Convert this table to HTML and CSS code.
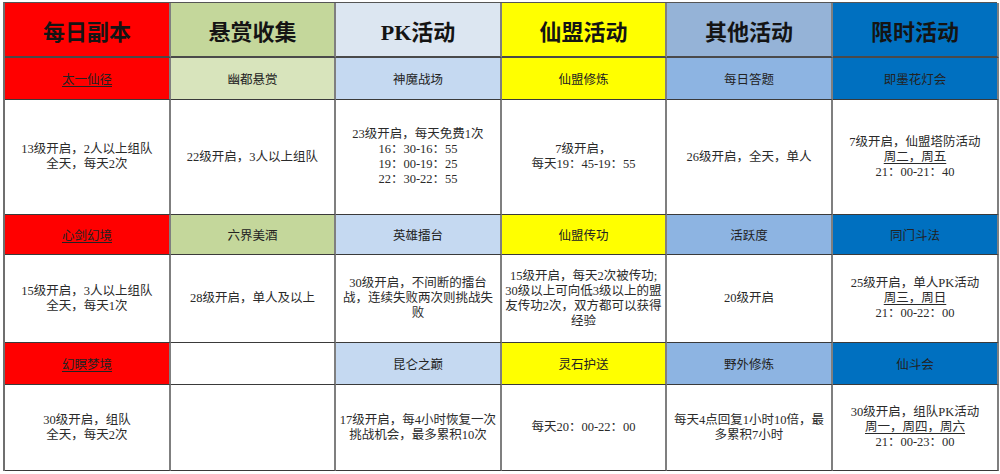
FILE: index.html
```html
<!DOCTYPE html>
<html lang="zh-CN">
<head>
<meta charset="utf-8">
<title>活动表</title>
<link rel="stylesheet" href="styles.css">
</head>
<body>
<div class="sheet">
  <div class="c h red">每日副本</div>
  <div class="c h green">悬赏收集</div>
  <div class="c h pale">PK活动</div>
  <div class="c h yellow">仙盟活动</div>
  <div class="c h steel">其他活动</div>
  <div class="c h blue">限时活动</div>

  <div class="c s red"><span class="u">太一仙径</span></div>
  <div class="c s green-lt">幽都悬赏</div>
  <div class="c s pale2">神魔战场</div>
  <div class="c s yellow">仙盟修炼</div>
  <div class="c s steel2">每日答题</div>
  <div class="c s blue">即墨花灯会</div>

  <div class="c d"><p class="t">13级开启，2人以上组队<br>全天，每天2次</p></div>
  <div class="c d"><p class="t">22级开启，3人以上组队</p></div>
  <div class="c d"><p class="t">23级开启，每天免费1次<br>16：30-16：55<br>19：00-19：25<br>22：30-22：55</p></div>
  <div class="c d"><p class="t">7级开启，<br>每天19：45-19：55</p></div>
  <div class="c d"><p class="t">26级开启，全天，单人</p></div>
  <div class="c d"><p class="t">7级开启，仙盟塔防活动<br><span class="u">周二，周五</span><br>21：00-21：40</p></div>

  <div class="c s red"><span class="u">心剑幻境</span></div>
  <div class="c s green">六界美酒</div>
  <div class="c s pale2">英雄擂台</div>
  <div class="c s yellow">仙盟传功</div>
  <div class="c s steel2">活跃度</div>
  <div class="c s blue">同门斗法</div>

  <div class="c d"><p class="t">15级开启，3人以上组队<br>全天，每天1次</p></div>
  <div class="c d"><p class="t">28级开启，单人及以上</p></div>
  <div class="c d"><p class="t">30级开启，不间断的擂台<br>战，连续失败两次则挑战失<br>败</p></div>
  <div class="c d"><p class="t">15级开启，每天2次被传功;<br>30级以上可向低3级以上的盟<br>友传功2次，双方都可以获得<br>经验</p></div>
  <div class="c d"><p class="t">20级开启</p></div>
  <div class="c d"><p class="t">25级开启，单人PK活动<br><span class="u">周三，周日</span><br>21：00-22：00</p></div>

  <div class="c s red"><span class="u">幻瞑梦境</span></div>
  <div class="c s white"></div>
  <div class="c s pale2">昆仑之巅</div>
  <div class="c s yellow">灵石护送</div>
  <div class="c s steel2">野外修炼</div>
  <div class="c s blue">仙斗会</div>

  <div class="c d"><p class="t">30级开启，组队<br>全天，每天2次</p></div>
  <div class="c d"></div>
  <div class="c d"><p class="t">17级开启，每4小时恢复一次<br>挑战机会，最多累积10次</p></div>
  <div class="c d"><p class="t">每天20：00-22：00</p></div>
  <div class="c d"><p class="t">每天4点回复1小时10倍，最<br>多累积7小时</p></div>
  <div class="c d"><p class="t">30级开启，组队PK活动<br><span class="u">周一，周四，周六</span><br>21：00-23：00</p></div>
</div>
</body>
</html>
```

FILE: styles.css
```css
html, body {
  margin: 0;
  padding: 0;
  background: #ffffff;
}

body {
  padding: 2px 0 0 3px;
  font-family: "Liberation Serif", "Noto Sans CJK SC", serif;
  color: #222222;
}

.sheet {
  display: grid;
  width: 994px;
  grid-template-columns: 166px 165px 166px 165px 166px 166px;
  grid-template-rows: 55px 42px 115px 40px 88px 42px 86px;
  border-left: 2px solid #6f6f6f;
  border-top: 1px solid #555555;
  box-sizing: border-box;
}

.c {
  box-sizing: border-box;
  border-right: 2px solid #7f7f7f;
  border-bottom: 1px solid #3a3a3a;
  display: flex;
  align-items: center;
  justify-content: center;
  text-align: center;
  white-space: nowrap;
}

.t {
  margin: 0;
}

.h {
  font-size: 22px;
  font-weight: bold;
  color: #141414;
  border-bottom: 2px solid #4a4a4a;
}

.s {
  font-size: 12.5px;
  color: #222222;
}

.d {
  font-size: 12.5px;
  line-height: 15px;
  color: #2a2a2a;
  background: #ffffff;
}

.u {
  text-decoration: underline;
  text-underline-offset: 2px;
}

.red { background: #ff0000; }
.green { background: #c4d79b; }
.green-lt { background: #d8e4bc; }
.pale { background: #dce6f1; }
.pale2 { background: #c5d9f1; }
.yellow { background: #ffff00; }
.steel { background: #95b3d7; }
.steel2 { background: #8db4e2; }
.blue { background: #0070c0; }
.white { background: #ffffff; }
```
